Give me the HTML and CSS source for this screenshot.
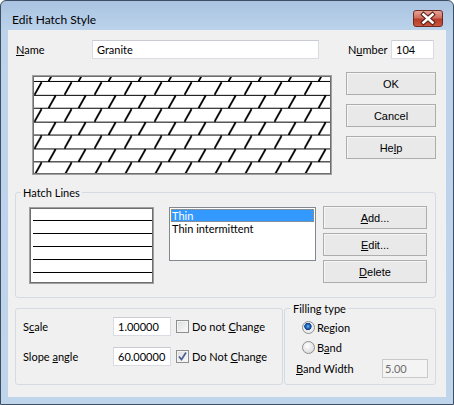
FILE: index.html
```html
<!DOCTYPE html>
<html lang="en">
<head>
  <meta charset="UTF-8" />
  <title>Edit Hatch Style</title>
  <link rel="stylesheet" href="styles.css">
</head>
<body>
  <div class="window">
    <div class="titlebar">
      <span class="title">Edit Hatch Style</span>
      <span class="close">
        <svg width="28" height="15" viewBox="0 0 28 15">
          <path d="M9.5 3.5 L18.5 11.5 M18.5 3.5 L9.5 11.5" stroke="#5a1d18" stroke-width="4.6" stroke-linecap="square"/>
          <path d="M9.5 3.5 L18.5 11.5 M18.5 3.5 L9.5 11.5" stroke="#fff" stroke-width="2.6" stroke-linecap="square"/>
        </svg>
      </span>
    </div>

    <div class="client">
      <div class="name-row">
        <label class="lbl-name"><u>N</u>ame</label>
        <div class="field name-field">Granite</div>
        <label class="lbl-number">N<u>u</u>mber</label>
        <div class="field number-field">104</div>
      </div>

      <div class="preview-row">
        <div class="sunken hatch-preview">
          <svg width="296" height="96">
            <defs>
              <pattern id="granite" patternUnits="userSpaceOnUse" x="0" y="-2" width="30" height="26.8">
                <path d="M0 6.7 H30 M0 20.1 H30" stroke="#000" stroke-width="1" shape-rendering="crispEdges"/>
                <path d="M0.6 19.6 L7.6 7.2 M14.6 33 L21.6 20.6 M14.6 6.2 L21.6 -6.2" stroke="#000" stroke-width="1.8"/>
              </pattern>
            </defs>
            <rect width="296" height="96" fill="#fff"/>
            <rect width="296" height="96" fill="url(#granite)"/>
          </svg>
        </div>
        <div class="main-buttons">
          <button>OK</button>
          <button>Cancel</button>
          <button>He<u>l</u>p</button>
        </div>
      </div>

      <fieldset class="group hatch-lines">
        <legend>Hatch Lines</legend>
        <div class="hatch-body">
          <div class="sunken lines-preview">
            <svg width="121" height="73">
              <path d="M2 11.5 H121 M2 24.5 H121 M2 37.5 H121 M2 50.5 H121 M2 63.5 H121" stroke="#000" stroke-width="1"/>
            </svg>
          </div>
          <div class="listbox">
            <div class="item selected">Thin</div>
            <div class="item">Thin intermittent</div>
          </div>
          <div class="line-buttons">
            <button class="wide"><u>A</u>dd...</button>
            <button class="wide"><u>E</u>dit...</button>
            <button class="wide"><u>D</u>elete</button>
          </div>
        </div>
      </fieldset>

      <div class="bottom-row">
        <fieldset class="group params">
          <legend class="blank"></legend>
          <div class="param-grid">
            <label>S<u>c</u>ale</label>
            <div class="field num-field">1.00000</div>
            <div class="check-row"><span class="checkbox"></span><span>Do not <u>C</u>hange</span></div>

            <label>Slope <u>a</u>ngle</label>
            <div class="field num-field">60.00000</div>
            <div class="check-row">
              <span class="checkbox checked">
                <svg width="11" height="11" viewBox="0 0 11 11"><path d="M2 5.5 L4.5 8.5 L9 1.5" fill="none" stroke="#4a5f97" stroke-width="1.7"/></svg>
              </span><span>Do Not <u>C</u>hange</span>
            </div>
          </div>
        </fieldset>

        <fieldset class="group filling">
          <legend>Filling type</legend>
          <div class="radio-row"><span class="radio on"></span><span>Re<u>g</u>ion</span></div>
          <div class="radio-row"><span class="radio"></span><span>B<u>a</u>nd</span></div>
          <div class="bw-row">
            <label><u>B</u>and Width</label>
            <div class="field bw-field">5.00</div>
          </div>
        </fieldset>
      </div>
    </div>
  </div>
</body>
</html>
```

FILE: styles.css
```css
body {
  margin: 0;
  background: #ffffff;
  font-family: Lato, "Liberation Sans", sans-serif;
  font-size: 11px;
  color: #000;
  overflow: hidden;
}
u {
  text-decoration-thickness: 1px;
}
.window {
  width: 454px;
  height: 405px;
  box-sizing: border-box;
  border: 1px solid #3e4f63;
  border-radius: 6px 6px 0 0;
  background: linear-gradient(#a9c3e1, #bcd3eb 30px, #bfd5ec);
  padding: 0 7px 7px;
  display: flex;
  flex-direction: column;
}
.titlebar {
  height: 29px;
  display: flex;
  align-items: flex-start;
  justify-content: space-between;
  padding: 0 3px 0 4px;
}
.title {
  margin-top: 11px;
  line-height: 15px;
  font-size: 12px;
}
.close {
  margin-top: 9px;
  width: 30px;
  height: 17px;
  box-sizing: border-box;
  border: 1px solid #6d2a24;
  border-radius: 3px;
  background: linear-gradient(#e8a496, #d0705f 45%, #b63b28 55%, #c9573f);
  display: flex;
  align-items: center;
  justify-content: center;
}
.close svg {
  display: block;
}
.client {
  flex: 1;
  background: #f0f0f0;
  padding: 10px 10px 0 7px;
}

/* inputs */
.field {
  box-sizing: border-box;
  height: 19px;
  line-height: 17px;
  padding-left: 4px;
  background: #fff;
  border: 1px solid #d9dce2;
  border-top-color: #c9ccd3;
}
.name-row {
  display: flex;
  align-items: center;
  height: 19px;
}
.lbl-name {
  width: 76px;
  padding-left: 1px;
}
.name-field {
  width: 227px;
}
.lbl-number {
  margin-left: 29px;
  width: 43px;
}
.number-field {
  width: 43px;
}

/* preview */
.preview-row {
  display: flex;
  align-items: flex-start;
  margin-top: 13px;
}
.sunken {
  box-sizing: border-box;
  border: 1px solid #a0a0a0;
  background: #fff;
}
.sunken svg {
  display: block;
  border: 1px solid #6e6e6e;
}
.hatch-preview {
  margin: 3px 0 0 17px;
  width: 300px;
  height: 100px;
}
.main-buttons {
  margin-left: 14px;
  display: flex;
  flex-direction: column;
  gap: 9px;
}
button {
  box-sizing: border-box;
  width: 90px;
  height: 23px;
  padding: 0;
  border: 1px solid #adadad;
  background: #e9e9e9;
  box-shadow: inset 1px 1px 0 #f6f6f6;
  font-family: "Liberation Sans", Arial, sans-serif;
  font-size: 11px;
  color: #000;
}
button.wide {
  width: 104px;
}

/* group boxes */
.group {
  margin: 0;
  min-width: 0;
  box-sizing: border-box;
  border: 1px solid #d5dbe0;
  border-radius: 3px;
}
legend {
  padding: 0 2px;
  line-height: 15px;
}
.hatch-lines {
  margin-top: 10px;
  padding: 6px 7px 13px 13px;
}
.hatch-lines legend {
  margin-left: -8px;
}
.hatch-body {
  display: flex;
  align-items: flex-start;
}
.lines-preview {
  margin-top: 1px;
  width: 125px;
  height: 77px;
}
.listbox {
  margin: 1px 0 0 15px;
  width: 147px;
  height: 54px;
  box-sizing: border-box;
  border: 1px solid #828790;
  background: #fff;
  padding: 1px;
}
.item {
  line-height: 13px;
  padding-left: 1px;
}
.item.selected {
  background: #3399ff;
  color: #fff;
  outline: 1px dotted #d0883a;
  outline-offset: -1px;
}
.line-buttons {
  margin-left: 7px;
  display: flex;
  flex-direction: column;
  gap: 4px;
}

/* bottom */
.bottom-row {
  display: flex;
  gap: 1px;
  margin-top: 3px;
}
.params {
  width: 268px;
  height: 84px;
  padding: 1px 7px 0;
}
legend.blank {
  padding: 0;
  height: 15px;
}
.param-grid {
  display: grid;
  grid-template-columns: 90px 58px auto;
  grid-auto-rows: 19px;
  row-gap: 11px;
  align-items: center;
}
.num-field {
  width: 58px;
}
.check-row {
  display: flex;
  align-items: center;
  padding-left: 5px;
}
.checkbox {
  box-sizing: border-box;
  width: 13px;
  height: 13px;
  margin-right: 3px;
  border: 1px solid #8e8f8f;
  background: linear-gradient(135deg, #dcdcdc, #fbfbfb);
  box-shadow: inset 0 0 0 1px #f4f4f4;
}
.checkbox svg {
  display: block;
}
.filling {
  width: 152px;
  height: 84px;
  padding: 4px 6px 0 11px;
}
.filling legend {
  margin-left: -5px;
}
.radio-row {
  display: flex;
  align-items: center;
  height: 15px;
  margin-left: 6px;
  margin-bottom: 5px;
}
.radio {
  box-sizing: border-box;
  width: 13px;
  height: 13px;
  margin-right: 2px;
  border: 1px solid #8e8f8f;
  border-radius: 50%;
  background: radial-gradient(circle at 40% 35%, #ffffff, #dedede 70%, #cfcfcf);
}
.radio.on {
  background: radial-gradient(circle at 45% 40%, #7fc2f5 0, #2a74c6 1.6px, #0d3f8a 3.4px, #e9e9e9 3.9px, #f4f4f4 100%);
}
.bw-row {
  display: flex;
  align-items: center;
  margin-top: -1px;
}
.bw-row label {
  width: 86px;
}
.bw-field {
  width: 46px;
  padding-left: 2px;
  background: #f4f4f4;
  border-color: #c9c9c9;
  color: #6d6d6d;
}
```
